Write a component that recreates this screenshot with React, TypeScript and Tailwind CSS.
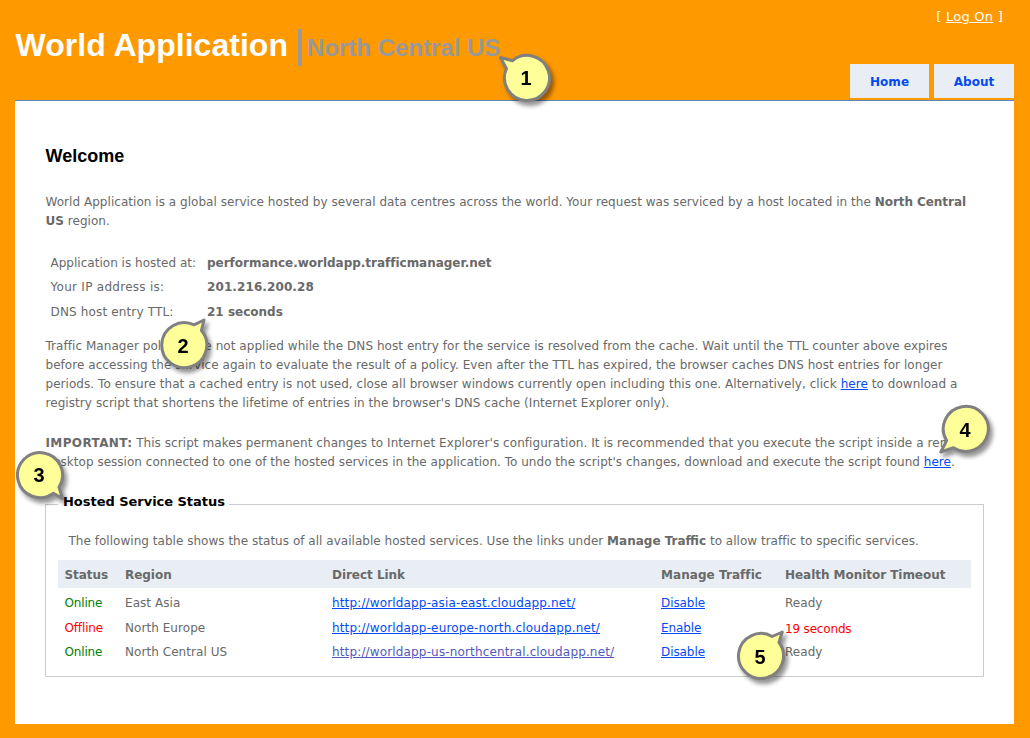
import React from "react";

type CalloutProps = {
  n: number;
  place: string;
  baseline: number;
  path: string;
};

function Callout({ n, place, baseline, path }: CalloutProps) {
  return (
    <svg
      className={`absolute overflow-visible drop-shadow-[3px_4px_2px_rgba(0,0,0,0.42)] ${place}`}
      width="80"
      height="80"
      viewBox="-40 -40 80 80"
    >
      <path d={path} fill="#ffff99" stroke="#808080" strokeWidth="3" strokeLinejoin="round" />
      <text
        x="-1"
        y={baseline}
        textAnchor="middle"
        className="fill-black font-['Liberation_Sans',sans-serif] text-[20px] font-bold"
      >
        {n}
      </text>
    </svg>
  );
}

const callouts: CalloutProps[] = [
  { n: 1, place: "left-[487px] top-[38px]", baseline: 7, path: "M-14.6 -17.2A22.5 22.5 0 1 1 -20.5 -9.4L-26.5 -20.5Z" },
  { n: 2, place: "left-[144px] top-[305px]", baseline: 8, path: "M17.4 -14.5A22.5 22.5 0 1 1 10 -20.2L20 -25Z" },
  { n: 3, place: "left-[-0.5px] top-[435px]", baseline: 7, path: "M13.4 18.2A22.5 22.5 0 1 1 19 12.2L22.5 23.5Z" },
  { n: 4, place: "left-[925.5px] top-[389px]", baseline: 8, path: "M-19.4 11.6A22.5 22.5 0 1 1 -12.5 18.7L-25.2 23Z" },
  { n: 5, place: "left-[720.5px] top-[616px]", baseline: 7.5, path: "M17.9 -13.6A22.5 22.5 0 1 1 11.2 -19.5L21.3 -24Z" },
];

const hostInfo = [
  { label: "Application is hosted at:", value: "performance.worldapp.trafficmanager.net", row: "h-6", labelStyle: "tracking-[0.02px]", valueStyle: "tracking-[-0.02px]" },
  { label: "Your IP address is:", value: "201.216.200.28", row: "h-[25px]", labelStyle: "tracking-[0.28px]", valueStyle: "tracking-[0.1px]" },
  { label: "DNS host entry TTL:", value: "21 seconds", row: "h-6", labelStyle: "tracking-[0.15px]", valueStyle: "tracking-normal" },
];

const services = [
  { status: "Online", region: "East Asia", url: "http://worldapp-asia-east.cloudapp.net/", action: "Disable", health: "Ready", row: "h-[25px]" },
  { status: "Offline", region: "North Europe", url: "http://worldapp-europe-north.cloudapp.net/", action: "Enable", health: "19 seconds", row: "h-[25px]" },
  { status: "Online", region: "North Central US", url: "http://worldapp-us-northcentral.cloudapp.net/", action: "Disable", health: "Ready", row: "h-[23px]", visited: true },
];

const grid = "grid grid-cols-[60.5px_207px_329px_124px_1fr] items-center pl-[6.5px]";

function Link({ children, visited }: { children: React.ReactNode; visited?: boolean }) {
  return (
    <a href="#" className={`underline ${visited ? "text-[#505abc]" : "text-[#034af3]"}`}>
      {children}
    </a>
  );
}

export default function App() {
  return (
    <div className="relative h-[738px] w-[1030px] overflow-hidden bg-[#ff9900] pr-4 pl-[15px] font-['DejaVu_Sans',sans-serif] text-[12px] leading-[19px] tracking-[0.055px] text-[#696969]">
      <header className="flex h-[100px] justify-between">
        <div className="flex pt-[29px]">
          <h1 className="w-[283px] pl-[0.5px] font-['Liberation_Sans',sans-serif] text-[32px] leading-[32px] font-bold tracking-[0.03px] whitespace-nowrap text-white">
            World Application
          </h1>
          <div className="h-[37px] border-l-4 border-[#999999] pt-[5px] pl-[5px] font-['Liberation_Sans',sans-serif] text-[24px] leading-[27px] font-bold tracking-normal whitespace-nowrap text-[#999999]">
            North Central US
          </div>
        </div>
        <div className="flex flex-col items-end">
          <div className="h-16 pt-[7px] pr-[11px] text-[13px] tracking-[0.25px] text-white">
            [ <a href="#" className="underline">Log On</a> ]
          </div>
          <nav className="flex gap-[5px] font-bold text-[#034af3]">
            <a href="#" className="flex h-[34px] w-[79px] items-center justify-center bg-[#e8eef4] pt-[2px]">Home</a>
            <a href="#" className="flex h-[34px] w-20 items-center justify-center bg-[#e8eef4] pt-[2px]">About</a>
          </nav>
        </div>
      </header>

      <main className="h-[624px] border-t border-[#5c87b2] bg-white px-[30px] pt-[45px]">
        <h2 className="h-[47px] pl-[0.5px] font-['Liberation_Sans',sans-serif] text-[18px] leading-5 font-bold tracking-normal text-black">
          Welcome
        </h2>
        <p className="pl-[0.5px] tracking-[0.04px] whitespace-nowrap">
          World Application is a global service hosted by several data centres across the world. Your request was serviced by a host located in the <b className="tracking-[-0.06px]">North Central</b>
          <br />
          <b className="tracking-normal">US</b> region.
        </p>
        <div className="mt-5 h-[73px] pl-[5.5px]">
          {hostInfo.map((h) => (
            <div key={h.label} className={`grid grid-cols-[156.5px_1fr] items-center ${h.row}`}>
              <span className={h.labelStyle}>{h.label}</span>
              <b className={h.valueStyle}>{h.value}</b>
            </div>
          ))}
        </div>
        <p className="mt-[13px] pl-[0.5px] tracking-[0.05px] whitespace-nowrap">
          Traffic Manager policies are not applied while the DNS host entry for the service is resolved from the cache. Wait until the TTL counter above expires
          <br />
          before accessing the service again to evaluate the result of a policy. Even after the TTL has expired, the browser caches DNS host entries for longer
          <br />
          periods. To ensure that a cached entry is not used, close all browser windows currently open including this one. Alternatively, click <Link>here</Link> to download a
          <br />
          <span className="tracking-[0.065px]">registry script that shortens the lifetime of entries in the browser's DNS cache (Internet Explorer only).</span>
        </p>
        <p className="mt-[21px] pl-[0.5px] tracking-[0.025px] whitespace-nowrap">
          <b className="tracking-[0.38px]">IMPORTANT:</b> <span className="tracking-[0.06px]">This script makes permanent changes to Internet Explorer's configuration. It is recommended that you execute the script inside a remote</span>
          <br />
          desktop session connected to one of the hosted services in the application. To undo the script's changes, download and execute the script found <Link>here</Link>.
        </p>
        <fieldset className="mt-5 h-[185px] w-[939px] border border-[#cccccc] px-3">
          <legend className="h-[25px] pr-1 pl-[5px] text-[13px] font-bold tracking-[-0.03px] text-black">
            Hosted Service Status
          </legend>
          <p className="h-[43px] pt-[15px] pl-[10.5px] tracking-[0.027px] whitespace-nowrap">
            The following table shows the status of all available hosted services. Use the links under <b className="tracking-normal">Manage Traffic</b>
            <span className="tracking-[0.02px]"> to allow traffic to specific services.</span>
          </p>
          <div className={`h-7 bg-[#e8eef4] pt-[2px] font-bold tracking-[-0.04px] ${grid}`}>
            <span>Status</span>
            <span>Region</span>
            <span>Direct Link</span>
            <span className="tracking-[0.06px]">Manage Traffic</span>
            <span>Health Monitor Timeout</span>
          </div>
          <div className="pt-[3px]">
            {services.map((s) => (
              <div key={s.region} className={`${grid} ${s.row}`}>
                <span className={`tracking-[-0.15px] ${s.status === "Online" ? "text-[#008000]" : "text-[#ff0000]"}`}>{s.status}</span>
                <span>{s.region}</span>
                <span className="tracking-[0.15px]"><Link visited={s.visited}>{s.url}</Link></span>
                <span className="tracking-[-0.08px]"><Link>{s.action}</Link></span>
                <span className={s.status === "Online" ? "" : "pt-[2px] tracking-[-0.17px] text-[#ff0000]"}>{s.health}</span>
              </div>
            ))}
          </div>
        </fieldset>
      </main>

      {callouts.map((c) => (
        <Callout key={c.n} {...c} />
      ))}
    </div>
  );
}
